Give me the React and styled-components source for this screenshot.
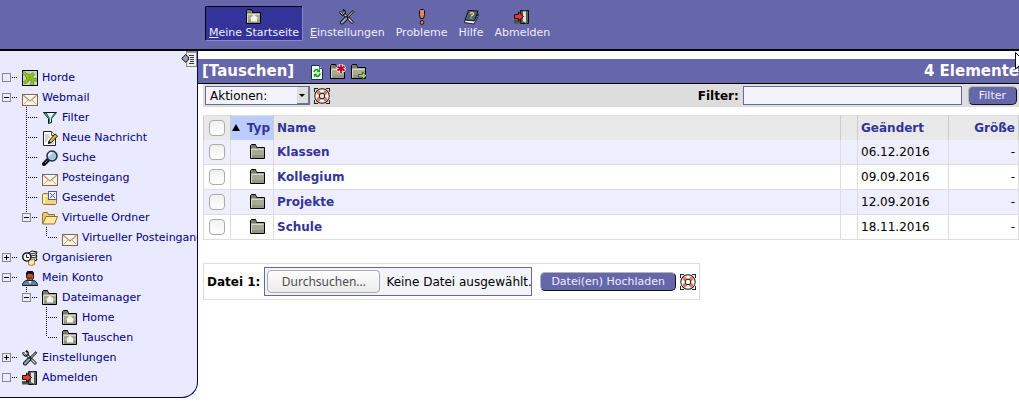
import React from "react";
import styled, { createGlobalStyle, css } from "styled-components";

const GlobalStyle = createGlobalStyle`
  * { box-sizing: border-box; }
  body {
    margin: 0;
    background: #fff;
    color: #000;
    font: 12px "DejaVu Sans", sans-serif;
    overflow-x: hidden;
  }
  button, input, select { font-family: inherit; }
`;

/* ---------- icons ---------- */

const Svg = styled.svg`
  display: block;
  flex: none;
  width: 16px;
  height: 16px;
`;

const FolderShape = () => (
  <>
    <path d="M.5 14.5V1.5L1.5 .5H5.5L6.5 3.5H14.5V14.5Z" fill="#a9aa96" stroke="#000" />
    <path d="M1 4H6L5 1H1Z" fill="#7a7b6b" />
    <path d="M1.5 13.5V5.5H13.5" fill="none" stroke="#d6d7c6" />
    <path d="M2 14H14V11H2Z" fill="#949582" />
  </>
);

const drawings = {
  folder: <FolderShape />,
  home: (
    <>
      <FolderShape />
      <path d="M8 5.5L12 9.5H11V12.5H5V9.5H4Z" fill="#f6f6e8" />
    </>
  ),
  newFolder: (
    <>
      <FolderShape />
      <path d="M11 0V9M6.8 2.5L15.2 6.8M15.2 2.5L6.8 6.8" stroke="#fff" strokeWidth="3.4" />
      <path d="M11 0.5V9M7.4 2.6L14.6 6.6M14.6 2.6L7.4 6.6" stroke="#c00018" strokeWidth="1.8" />
    </>
  ),
  moveFolder: (
    <>
      <FolderShape />
      <path d="M7.5 10.5H11.5V8L15.7 11.7L11.5 15.5V13H7.5Z" fill="#a9cf85" stroke="#2a4a18" strokeWidth=".8" />
    </>
  ),
  reload: (
    <>
      <path d="M2.5 1.5H10.5L13.5 4.5V15.5H2.5Z" fill="#f4faff" stroke="#1d2f3d" />
      <path d="M10.5 1.5V4.5H13.5" fill="#bcd" stroke="#456" />
      <path d="M5 8C5.5 5.5 8 5 9.2 6.3M11 9.5C10.5 12.5 8 13 6.6 11.5" fill="none" stroke="#10a010" strokeWidth="1.7" />
      <path d="M11 4.5V8.3H7.3ZM4.8 13.5V9.7H8.5Z" fill="#10a010" />
    </>
  ),
  horde: (
    <>
      <rect x=".5" y=".5" width="15" height="15" fill="#ccd0cc" stroke="#000" />
      <path d="M1 2.5L4 4.5L6 8L5 11L2 13M4 5L9 5.5L12 3.5M9 5.5L10.5 9.5L15 10M10.5 9.5L10 15M6 8L9 9" fill="none" stroke="#52780a" strokeWidth="3.2" />
      <path d="M1 2.5L4 4.5L6 8L5 11L2 13M4 5L9 5.5L12 3.5M9 5.5L10.5 9.5L15 10M10.5 9.5L10 15M6 8L9 9" fill="none" stroke="#8cc414" strokeWidth="2.2" />
    </>
  ),
  mail: (
    <>
      <rect x=".5" y="4.5" width="15" height="11" fill="#fff3df" stroke="#776a5b" />
      <path d="M1.5 14.5L6.5 9.5M14.5 14.5L9.5 9.5" stroke="#c1a486" />
      <path d="M1 5L8 11L15 5" fill="#fffaf0" stroke="#b39473" strokeWidth="1.2" />
    </>
  ),
  filter: (
    <>
      <path d="M1.5 2.5H14.5L9.5 8.5V12.5L6.5 13.5V8.5Z" fill="#fff" stroke="#111" />
      <path d="M2.5 3H5L8 7.5V12.5L7 13V8.5Z M12 3H14L9.5 8.5H8.5Z" fill="#168b8e" />
      <path d="M5 3H9L8 8Z" fill="#dff4f4" />
    </>
  ),
  compose: (
    <>
      <path d="M1.5 1.5H9.5L13.5 5.5V15.5H1.5Z" fill="#fcfcfc" stroke="#222" />
      <path d="M9.5 1.5V5.5H13.5" fill="#ddd" stroke="#555" />
      <path d="M3 5H7M3 7H8M3 9H6M3 11H5M9 13H12" stroke="#aaa" />
      <path d="M7 11L13 4L15.5 6L9.5 12.5L6.5 13.5Z" fill="#efba3a" stroke="#111" />
      <path d="M6 14L7 11L9 12.5Z" fill="#111" />
    </>
  ),
  search: (
    <>
      <path d="M6 10L2 14" stroke="#111" strokeWidth="4" strokeLinecap="round" />
      <path d="M5.5 10.5L3 13" stroke="#888" strokeWidth="1" />
      <circle cx="10" cy="6" r="5" fill="#a9c7de" stroke="#22303c" strokeWidth="1.5" />
      <path d="M7 6A3 3 0 0 1 10 3" fill="none" stroke="#f0f8ff" strokeWidth="2" />
    </>
  ),
  sent: (
    <>
      <path d="M.5 13.5V4.5L1.5 3.5H5.5L6.5 4.5H14.5V13.5L13.5 14.5H1.5Z" fill="#f6d47b" stroke="#96722c" />
      <path d="M2 13V6H5" fill="none" stroke="#fff3bd" strokeWidth="2" />
      <rect x="6.5" y="1.5" width="8" height="8" fill="#f5f5ff" stroke="#5454b8" />
      <path d="M8 3L13 8M13 3L8 8" stroke="#4b4bb0" />
    </>
  ),
  openFolder: (
    <>
      <path d="M.5 13.5V3.5L1.5 2.5H5.5L6.5 4.5H12.5V7" fill="#eec867" stroke="#93702b" />
      <path d="M.7 14L4 6.5H15.5L12.5 14Z" fill="#ffe89f" stroke="#93702b" />
    </>
  ),
  organize: (
    <>
      <path d="M5 4L10 1L15 2L14 5L15 6L14 8L15 10L9 12L5 9Z" fill="#fff" stroke="#000" />
      <path d="M8 4L14 3M9 6L14 5M9 8L14 7" stroke="#222" />
      <path d="M6.5 8.5L9.5 10L12.5 8.5V14.5L9.5 15.5L6.5 14.5Z" fill="#ffe6a9" stroke="#997a3e" />
      <circle cx="4.8" cy="7" r="4.1" fill="#f5f5f5" stroke="#000" strokeWidth="1.3" />
      <path d="M4.5 4.5V7.5H7" fill="none" stroke="#222" />
    </>
  ),
  user: (
    <>
      <path d="M.5 15.5C.5 12 3 10.5 5 10.5H11C14 10.5 15.5 13 15.5 15.5Z" fill="#62839b" stroke="#18242d" />
      <path d="M6 10.5H10L8 14Z" fill="#fff" />
      <path d="M4.5 7V3.5L6 1.5H10L11.5 3.5V8L10 10.5H6Z" fill="#a45a2c" stroke="#31180c" />
      <path d="M4 6V3L5.5 1H10.5L12 3V6L10 3.8H6Z" fill="#160b07" />
      <path d="M6 8H10" stroke="#4b2110" />
    </>
  ),
  tools: (
    <>
      <path d="M4.5 4.5L14 14" stroke="#111" strokeWidth="3" />
      <path d="M5 5L13.5 13.5" stroke="#ddd" strokeWidth="1.2" />
      <path d="M1.5 2V4L3.5 5.8L5.8 4.5V2.5L4 .8" fill="none" stroke="#111" strokeWidth="2" />
      <path d="M1.8 2.5V4L3.5 5.2L5.2 4.2V2.5" fill="none" stroke="#ddd" strokeWidth=".8" />
      <path d="M14.5 2L8 8.5" stroke="#111" strokeWidth="2.4" />
      <path d="M14 2.5L8.5 8" stroke="#eee" />
      <path d="M7.5 9L3 13.5" stroke="#111" strokeWidth="4" strokeLinecap="round" />
      <path d="M7 9.5L3 13.5" stroke="#8eaac0" strokeWidth="2.2" strokeLinecap="round" />
    </>
  ),
  logout: (
    <>
      <path d="M6.5 13.5V1.5H14.5V14.5H6.5Z" fill="#5a605a" stroke="#111" />
      <path d="M8.5 2H12.5V14.5L8.5 12.5Z" fill="#dfe4df" stroke="#555" />
      <path d="M0 11H6V14.5H0Z" fill="#46523b" />
      <path d="M.5 5.5H4.5V3L9.5 7.5L4.5 12V9.5H.5Z" fill="#e0402a" stroke="#2a0503" />
    </>
  ),
  alert: (
    <>
      <path d="M6.5 .5H9.5L10.5 1.5V5.5L9.5 9.5H6.5L5.5 5.5V1.5Z" fill="#ec8161" stroke="#111" />
      <circle cx="8" cy="13.5" r="1.9" fill="#ec8161" stroke="#111" />
    </>
  ),
  help: (
    <>
      <path d="M5.5 1.5L15 2L11.5 12L2 11Z" fill="#49647b" stroke="#111" />
      <path d="M2 11L11.5 12L15 5V7.5L11 15L1.5 13.5Z" fill="#f2f2f2" stroke="#111" strokeWidth=".9" />
      <path d="M7.2 4.8C8 3.2 11 3.4 10.4 5.2C10 6.2 8.6 6 8.3 7.4M8 8.4L7.8 9.4" fill="none" stroke="#ffd65a" strokeWidth="1.3" />
    </>
  ),
  buoy: (
    <>
      <path d="M0 0H4V1H1V4H0ZM12 0H16V4H15V1H12ZM16 16H12V15H15V12H16ZM0 16V12H1V15H4V16Z" fill="#222" />
      <circle cx="8" cy="8" r="5" fill="none" stroke="#111" strokeWidth="5.4" />
      <circle cx="8" cy="8" r="5" fill="none" stroke="#fbf3ee" strokeWidth="3.6" />
      <path d="M10 12.7L12.7 10M6 12.7L3.3 10M3.3 6L6 3.3M10 3.3L12.7 6" fill="none" stroke="#e0765a" strokeWidth="3.2" />
    </>
  ),
  collapse: (
    <>
      <rect x="5.5" y=".5" width="10" height="15" fill="#eee" stroke="#888" />
      <path d="M5 1.5H15" stroke="#999" />
      <path d="M8 4.5H13M9 6.5H13M9 8.5H13M9 10.5H13M8 12.5H13" stroke="#333" />
      <path d="M.7 7.5L4.5 3.8L7.5 6V9L4.5 11.2Z" fill="#9b9bb2" stroke="#111" />
    </>
  ),
};

const Icon = ({ name }) => (
  <Svg viewBox="0 0 16 16" aria-hidden="true">{drawings[name]}</Svg>
);

/* ---------- top menu ---------- */

const TopBar = styled.header`
  background: #6666aa;
  border-bottom: 2px solid #000;
  padding: 6px 0 8px 205px;
`;

const Menu = styled.nav`
  display: flex;
  gap: 3px;
`;

const MenuItem = styled.a`
  display: flex;
  flex-direction: column;
  align-items: center;
  gap: 1px;
  height: 35px;
  padding: 2px 3px;
  border: 1px solid transparent;
  border-radius: 2px;
  color: #eeeeff;
  font-size: 11px;
  line-height: 14px;
  white-space: nowrap;
  text-decoration: none;
  ${(p) => p.$active && css`
    background: #333399;
    border-color: #000 #8888cc #8888cc #000;
  `}
`;

/* ---------- sidebar ---------- */

const Page = styled.div`
  display: flex;
  align-items: flex-start;
`;

const Sidebar = styled.aside`
  flex: none;
  width: 198px;
  overflow: hidden;
  padding-bottom: 10px;
  background: #e9e9ff;
  border: solid #000066;
  border-width: 0 1px 1px 0;
  border-bottom-right-radius: 16px;
`;

const CollapseButton = styled.button`
  display: block;
  margin: 0 0 0 auto;
  padding: 0;
  border: 0;
  background: none;
`;

const TreeRow = styled.div`
  display: flex;
  align-items: center;
  height: 20px;
`;

const TreeLink = styled.a`
  display: flex;
  align-items: center;
  gap: 4px;
  padding: 2px 0 0 2px;
  color: #000080;
  font-size: 11px;
  line-height: 20px;
  white-space: nowrap;
  text-decoration: none;
`;

const Branch = styled.svg`
  flex: none;
  width: 20px;
  height: 20px;
  shape-rendering: crispEdges;
`;

/* marks: box, plus, minus, tee, elbow, blank; "minus" with `up` joins the row above */
const Connector = ({ kind, up }) => {
  const boxed = kind === "box" || kind === "plus" || kind === "minus";
  return (
    <Branch viewBox="0 0 20 20" aria-hidden="true">
      {up && <path d="M6.5 0V6" stroke="#000" strokeDasharray="1 1" />}
      {kind === "tee" && <path d="M6.5 0V20" stroke="#000" strokeDasharray="1 1" />}
      {kind === "elbow" && <path d="M6.5 0V10" stroke="#000" strokeDasharray="1 1" />}
      {(kind === "tee" || kind === "elbow") && (
        <path d="M8 10.5H18" stroke="#000" strokeDasharray="1 1" />
      )}
      {boxed && (
        <>
          <rect x="2.5" y="6.5" width="8" height="8" fill="none" stroke="#888" />
          <path d="M12 10.5H18" stroke="#000" strokeDasharray="1 1" />
        </>
      )}
      {(kind === "plus" || kind === "minus") && <path d="M4 10.5H9" stroke="#000" />}
      {kind === "plus" && <path d="M6.5 8V13" stroke="#000" />}
    </Branch>
  );
};

const tree = [
  { label: "Horde", icon: "horde", marks: ["box"] },
  { label: "Webmail", icon: "mail", marks: ["minus"] },
  { label: "Filter", icon: "filter", marks: ["blank", "tee"] },
  { label: "Neue Nachricht", icon: "compose", marks: ["blank", "tee"] },
  { label: "Suche", icon: "search", marks: ["blank", "tee"] },
  { label: "Posteingang", icon: "mail", marks: ["blank", "tee"] },
  { label: "Gesendet", icon: "sent", marks: ["blank", "tee"] },
  { label: "Virtuelle Ordner", icon: "openFolder", marks: ["blank", "minus"] },
  { label: "Virtueller Posteingang", icon: "mail", marks: ["blank", "blank", "elbow"] },
  { label: "Organisieren", icon: "organize", marks: ["plus"] },
  { label: "Mein Konto", icon: "user", marks: ["minus"] },
  { label: "Dateimanager", icon: "home", marks: ["blank", "minus"] },
  { label: "Home", icon: "home", marks: ["blank", "blank", "tee"] },
  { label: "Tauschen", icon: "home", marks: ["blank", "blank", "elbow"] },
  { label: "Einstellungen", icon: "tools", marks: ["plus"] },
  { label: "Abmelden", icon: "logout", marks: ["box"] },
];

/* ---------- main area ---------- */

const Main = styled.main`
  flex: 1;
  min-width: 0;
  padding-top: 8px;
`;

const TitleBar = styled.div`
  display: flex;
  align-items: center;
  height: 25px;
  padding-left: 4px;
  background: #6666aa;
  border-bottom: 1px solid #000;
  color: #fff;
  white-space: nowrap;
`;

const Title = styled.h1`
  margin: 0;
  font-size: 15px;
  line-height: 24px;
`;

const TitleIcons = styled.div`
  display: flex;
  gap: 5px;
  margin: 2px auto 0 15px;
`;

const IconLink = styled.a`
  display: block;
  color: inherit;
`;

const ElementCount = styled.strong`
  font-size: 15px;
  line-height: 24px;
`;

const Content = styled.div`
  padding-left: 5px;
`;

const Toolbar = styled.form`
  display: flex;
  align-items: center;
  height: 23px;
  padding: 0 2px;
  background: #ddd;
`;

const SelectBox = styled.div`
  position: relative;
  width: 105px;
  height: 19px;
  margin-right: 4px;
`;

const ActionSelect = styled.select`
  appearance: none;
  display: block;
  width: 100%;
  height: 100%;
  padding: 0 16px 0 4px;
  border: 1px solid #6666aa;
  border-radius: 0;
  background: #f3f3fa;
  color: #000;
  font-size: 12px;
`;

const SelectArrow = styled.span`
  position: absolute;
  top: 1px;
  right: 1px;
  bottom: 1px;
  width: 12px;
  background: #ddd;
  border: solid #777;
  border-width: 0 1px 1px 0;
  pointer-events: none;
  &::after {
    content: "";
    position: absolute;
    top: 7px;
    left: 2px;
    border: 3px solid transparent;
    border-top-color: #000;
    border-bottom: 0;
  }
`;

const FilterLabel = styled.label`
  margin: 0 4px 0 auto;
  font-weight: bold;
`;

const FilterInput = styled.input`
  width: 219px;
  height: 19px;
  margin-right: 6px;
  border: 1px solid #6666aa;
  background: #f3f3fa;
  font-size: 12px;
`;

const Button = styled.button`
  height: 19px;
  padding: 0 10px;
  border: 1px solid;
  border-color: #b5b5b5 #111 #111 #b5b5b5;
  border-radius: 5px;
  background: #6666aa;
  color: #eeeeff;
  font-size: 11px;
  line-height: 16px;
  white-space: nowrap;
`;

const FileTable = styled.table`
  width: 100%;
  margin-top: 8px;
  border-collapse: collapse;
  table-layout: fixed;
`;

const cell = css`
  padding: 0 3px;
  border: 1px solid #ddd;
  text-align: ${(p) => p.$align || "left"};
  white-space: nowrap;
`;

const HeadCell = styled.th`
  ${cell}
  height: 24px;
  background: ${(p) => (p.$sorted ? "#bbccff" : "#e9e9e9")};
  border-color: #ddd #ccc;
  border-bottom: 0;
  color: #333399;
`;

const Cell = styled.td`
  ${cell}
  height: 25px;
`;

const FileRow = styled.tr`
  background: ${(p) => (p.$odd ? "#eeeeff" : "#fff")};
  &:first-child td { border-top: 0; }
`;

const Check = styled.input`
  appearance: none;
  display: block;
  width: 16px;
  height: 16px;
  margin: 0 auto;
  border: 1px solid #aaa;
  border-radius: 4px;
  background: linear-gradient(#f0f0f0, #fff);
`;

const SortHead = styled.span`
  display: flex;
  align-items: center;
  justify-content: space-between;
`;

const SortMark = styled.span`
  margin-left: -2px;
  border: 4px solid transparent;
  border-top: 0;
  border-bottom: 7px solid #000;
`;

const TypeIcon = styled.span`
  display: flex;
  justify-content: flex-end;
  padding-right: 4px;
`;

const FileLink = styled.a`
  color: #333399;
  font-weight: bold;
  text-decoration: none;
`;

const UploadForm = styled.form`
  display: flex;
  align-items: center;
  width: fit-content;
  height: 37px;
  margin-top: 23px;
  padding: 0 3px;
  border: 1px solid #ddd;
`;

const UploadLabel = styled.label`
  margin-right: 4px;
  font-weight: bold;
`;

const FilePicker = styled.div`
  position: relative;
  display: flex;
  align-items: center;
  gap: 6px;
  width: 268px;
  height: 29px;
  margin-right: 8px;
  padding: 0 2px;
  border: 1px solid #6666aa;
  background: #f3f3fa;
  white-space: nowrap;
`;

const FileInput = styled.input`
  position: absolute;
  inset: 0;
  width: 100%;
  opacity: 0;
`;

const BrowseFace = styled.span`
  flex: none;
  width: 113px;
  height: 23px;
  border: 1px solid #aaa;
  border-radius: 4px;
  background: linear-gradient(#fdfdfd, #ececec);
  color: #4c4c4c;
  font: 12px/21px "Noto Sans", sans-serif;
  text-align: center;
`;

const HelpLink = styled(IconLink)`
  margin-left: 4px;
`;

const Pointer = styled.svg`
  position: absolute;
  top: 52px;
  right: 0;
  width: 4px;
  height: 18px;
  pointer-events: none;
`;

const files = [
  { name: "Klassen", date: "06.12.2016" },
  { name: "Kollegium", date: "09.09.2016" },
  { name: "Projekte", date: "12.09.2016" },
  { name: "Schule", date: "18.11.2016" },
];

export default function App() {
  return (
    <>
      <GlobalStyle />
      <TopBar>
        <Menu>
          <MenuItem href="#start" $active><Icon name="home" /><span><u>M</u>eine Startseite</span></MenuItem>
          <MenuItem href="#prefs"><Icon name="tools" /><span><u>E</u>instellungen</span></MenuItem>
          <MenuItem href="#problems"><Icon name="alert" />Probleme</MenuItem>
          <MenuItem href="#help"><Icon name="help" />Hilfe</MenuItem>
          <MenuItem href="#logout"><Icon name="logout" />Abmelden</MenuItem>
        </Menu>
      </TopBar>
      <Page>
        <Sidebar>
          <CollapseButton type="button" aria-label="Seitenleiste einklappen"><Icon name="collapse" /></CollapseButton>
          {tree.map((item) => (
            <TreeRow key={item.label}>
              {item.marks.map((kind, i) => (
                <Connector key={i} kind={kind} up={kind === "minus" && i > 0} />
              ))}
              <TreeLink href="#"><Icon name={item.icon} />{item.label}</TreeLink>
            </TreeRow>
          ))}
        </Sidebar>
        <Main>
          <TitleBar>
            <Title>[Tauschen]</Title>
            <TitleIcons>
              <IconLink href="#reload" aria-label="Aktualisieren"><Icon name="reload" /></IconLink>
              <IconLink href="#new" aria-label="Neuer Ordner"><Icon name="newFolder" /></IconLink>
              <IconLink href="#go" aria-label="Ordner wechseln"><Icon name="moveFolder" /></IconLink>
            </TitleIcons>
            <ElementCount>4 Elemente</ElementCount>
          </TitleBar>
          <Content>
            <Toolbar>
              <SelectBox>
                <ActionSelect aria-label="Aktionen"><option>Aktionen:</option></ActionSelect>
                <SelectArrow />
              </SelectBox>
              <IconLink href="#actions-help" aria-label="Hilfe"><Icon name="buoy" /></IconLink>
              <FilterLabel htmlFor="filter">Filter:</FilterLabel>
              <FilterInput id="filter" type="text" />
              <Button type="button">Filter</Button>
            </Toolbar>
            <FileTable>
              <colgroup>
                <col style={{ width: 27 }} />
                <col style={{ width: 43 }} />
                <col />
                <col style={{ width: 17 }} />
                <col style={{ width: 91 }} />
                <col style={{ width: 70 }} />
              </colgroup>
              <thead>
                <tr>
                  <HeadCell><Check type="checkbox" aria-label="Alle auswählen" /></HeadCell>
                  <HeadCell $sorted><SortHead><SortMark />Typ</SortHead></HeadCell>
                  <HeadCell>Name</HeadCell>
                  <HeadCell />
                  <HeadCell>Geändert</HeadCell>
                  <HeadCell $align="right">Größe</HeadCell>
                </tr>
              </thead>
              <tbody>
                {files.map((file, i) => (
                  <FileRow key={file.name} $odd={i % 2 === 0}>
                    <Cell><Check type="checkbox" aria-label={file.name} /></Cell>
                    <Cell><TypeIcon><Icon name="folder" /></TypeIcon></Cell>
                    <Cell><FileLink href="#">{file.name}</FileLink></Cell>
                    <Cell />
                    <Cell>{file.date}</Cell>
                    <Cell $align="right">-</Cell>
                  </FileRow>
                ))}
              </tbody>
            </FileTable>
            <UploadForm>
              <UploadLabel htmlFor="file1">Datei 1:</UploadLabel>
              <FilePicker>
                <FileInput id="file1" type="file" />
                <BrowseFace>Durchsuchen...</BrowseFace>
                <span>Keine Datei ausgewählt.</span>
              </FilePicker>
              <Button type="button">Datei(en) Hochladen</Button>
              <HelpLink href="#upload-help" aria-label="Hilfe"><Icon name="buoy" /></HelpLink>
            </UploadForm>
          </Content>
        </Main>
      </Page>
      <Pointer viewBox="0 0 4 18" aria-hidden="true">
        <path d="M.5 .5V17L5 13V5Z" fill="#fff" stroke="#000" />
      </Pointer>
    </>
  );
}
